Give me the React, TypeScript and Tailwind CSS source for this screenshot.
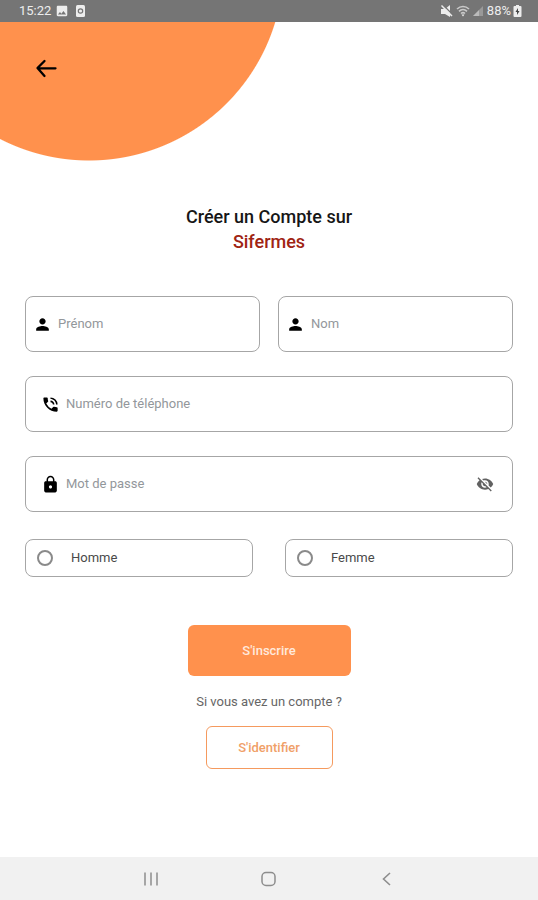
import { useState, type ReactNode } from "react";
import {
  MdImage,
  MdLock,
  MdPerson,
  MdPhoneInTalk,
  MdVisibility,
  MdVisibilityOff,
} from "react-icons/md";

type FieldProps = {
  id: string;
  label: string;
  icon: ReactNode;
  type?: string;
  wide?: boolean;
  action?: ReactNode;
};

const Field = ({ id, label, icon, type = "text", wide = false, action }: FieldProps) => {
  return (
    <div
      className={`flex h-14 min-w-0 flex-1 items-center gap-1.5 rounded-lg border border-[#a6a6a6] pr-[18px] text-black ${
        wide ? "pl-[15px]" : "pl-[7px]"
      }`}
    >
      <label htmlFor={id} aria-label={label} className="shrink-0">
        {icon}
      </label>
      <input
        id={id}
        name={id}
        type={type}
        placeholder={label}
        className="w-full min-w-0 flex-1 bg-transparent text-[13px] leading-5 text-[#444] outline-none placeholder:text-[#93979b]"
      />
      {action}
    </div>
  );
};

type GenderOptionProps = {
  value: string;
  checked: boolean;
  onSelect: (value: string) => void;
};

const GenderOption = ({ value, checked, onSelect }: GenderOptionProps) => {
  return (
    <label className="flex h-[38px] flex-1 items-center gap-[18px] rounded-lg border border-[#a6a6a6] px-[11px] text-[13px] text-[#4a4a4a]">
      <input
        type="radio"
        name="gender"
        value={value}
        checked={checked}
        onChange={() => onSelect(value)}
        className="size-4 appearance-none rounded-full border-2 border-[#8a8a8a] checked:border-[5px] checked:border-[#ff914d]"
      />
      {value}
    </label>
  );
};

const StatusBar = () => {
  return (
    <div className="flex h-[22px] items-center justify-between bg-[#757575] pl-[19px] pr-4 text-[13px] text-[#ededed]">
      <div className="flex items-center gap-1">
        <span>15:22</span>
        <MdImage size={14} />
        <svg width="14" height="14" viewBox="0 0 14 14">
          <rect x="3" y="1" width="9" height="12" rx="1.5" fill="currentColor" />
          <circle cx="7.5" cy="7" r="2.2" fill="none" stroke="#757575" strokeWidth="1.2" />
        </svg>
      </div>
      <div className="flex items-center gap-0.5">
        {/* Muted speaker */}
        <svg width="14" height="14" viewBox="0 0 14 14">
          <path d="M1 5h4l5-4v12L5 10H1z" fill="currentColor" />
          <path d="M3 1l10 10" stroke="#757575" strokeWidth="1.4" />
          <path d="M1.500 1.500L12 12" stroke="currentColor" strokeWidth="1.5" />
        </svg>
        {/* Wifi */}
        <svg width="14" height="14" viewBox="0 0 14 14" fill="none" stroke="currentColor" strokeWidth="1.6">
          <path d="M1 5c3.500-3.300 8.500-3.300 12 0M3 7.300c2.300-2.200 5.700-2.200 8 0M5 9.500c1.200-1.100 2.800-1.100 4 0" opacity="0.7" />
          <path d="M7 12.500l-1.500-2h3z" fill="currentColor" stroke="none" />
        </svg>
        {/* Signal */}
        <svg width="13" height="14" viewBox="0 0 13 14" fill="currentColor">
          <path d="M1 12L11 2v10z" opacity="0.3" />
          <path d="M1 12l6-6v6z" opacity="0.4" />
        </svg>
        <span>88%</span>
        {/* Battery */}
        <svg width="9" height="14" viewBox="0 0 9 14">
          <path d="M3 1h3v1h1.500q1 0 1 1v9q0 1-1 1h-6q-1 0-1-1V3q0-1 1-1H3z" fill="currentColor" />
          <path d="M5 4L2.500 8H4v3l2.500-4H5z" fill="#444" />
        </svg>
      </div>
    </div>
  );
};

const NavigationBar = () => {
  return (
    <nav className="flex h-[43px] items-center justify-center gap-[102px] bg-[#f1f1f1] text-[#8d8d8d]">
      <button type="button" aria-label="Applications récentes">
        <svg width="16" height="16" viewBox="0 0 16 16" stroke="currentColor" strokeWidth="1.5">
          <path d="M2 1.500v13M8 1.500v13M14 1.500v13" />
        </svg>
      </button>
      <button type="button" aria-label="Accueil">
        <svg width="16" height="16" viewBox="0 0 16 16" fill="none" stroke="currentColor" strokeWidth="1.5">
          <rect x="1" y="1.5" width="13" height="13" rx="4" />
        </svg>
      </button>
      <button type="button" aria-label="Retour système">
        <svg width="16" height="16" viewBox="0 0 16 16" fill="none" stroke="currentColor" strokeWidth="1.6">
          <path d="M11 2L4.500 8l6.500 6" />
        </svg>
      </button>
    </nav>
  );
};

const App = () => {
  const [gender, setGender] = useState("");
  const [showPassword, setShowPassword] = useState(false);

  return (
    <div className="flex min-h-screen flex-col bg-white font-['Roboto',sans-serif]">
      <StatusBar />

      {/* Header with the rounded orange corner */}
      <header className="h-[140px] bg-[radial-gradient(circle_at_89px_-56px,#ff914d_194px,transparent_195px)] pl-[34px] pt-[34px]">
        <button type="button" aria-label="Retour" className="block text-black">
          <svg
            width="24"
            height="24"
            viewBox="0 0 24 24"
            fill="none"
            stroke="currentColor"
            strokeWidth="2.3"
            strokeLinecap="round"
            strokeLinejoin="round"
          >
            <path d="M10.500 5L3.500 12l7 8M4 12.300h17.500" />
          </svg>
        </button>
      </header>

      <main className="flex flex-1 flex-col px-[25px] pt-[42px]">
        <h1 className="text-center text-lg leading-[25px] font-medium text-[#161616]">
          Créer un Compte sur
          <span className="block text-[#a02413]">Sifermes</span>
        </h1>

        <form className="mt-[42px] flex flex-col" onSubmit={(e) => e.preventDefault()}>
          <div className="flex flex-col gap-6">
            <div className="flex gap-[18px]">
              <Field id="firstName" label="Prénom" icon={<MdPerson size={19} />} />
              <Field id="lastName" label="Nom" icon={<MdPerson size={19} />} />
            </div>
            <div className="flex">
              <Field id="phone" label="Numéro de téléphone" type="tel" wide icon={<MdPhoneInTalk size={19} />} />
            </div>
            <div className="flex">
              <Field
                id="password"
                label="Mot de passe"
                type={showPassword ? "text" : "password"}
                wide
                icon={<MdLock size={19} />}
                action={
                  <button
                    type="button"
                    aria-label="Afficher le mot de passe"
                    onClick={() => setShowPassword(!showPassword)}
                    className="text-[#616161]"
                  >
                    {showPassword ? <MdVisibility size={18} /> : <MdVisibilityOff size={18} />}
                  </button>
                }
              />
            </div>
          </div>

          <div className="mt-[27px] flex gap-8">
            <GenderOption value="Homme" checked={gender === "Homme"} onSelect={setGender} />
            <GenderOption value="Femme" checked={gender === "Femme"} onSelect={setGender} />
          </div>

          <button
            type="submit"
            className="mt-12 h-[51px] w-[163px] self-center rounded-md bg-[#ff914d] text-[13px] font-medium text-[#ffe9dc]"
          >
            S'inscrire
          </button>
        </form>

        <div className="flex flex-col items-center pt-4 pb-6">
          <p className="text-[13px] leading-5 text-[#666]">Si vous avez un compte ?</p>
          <button
            type="button"
            className="mt-[14px] h-[43px] w-[127px] rounded-md border border-[#f59a5e] text-[13px] font-medium text-[#f0a068]"
          >
            S'identifier
          </button>
        </div>
      </main>

      <NavigationBar />
    </div>
  );
};

export default App;
